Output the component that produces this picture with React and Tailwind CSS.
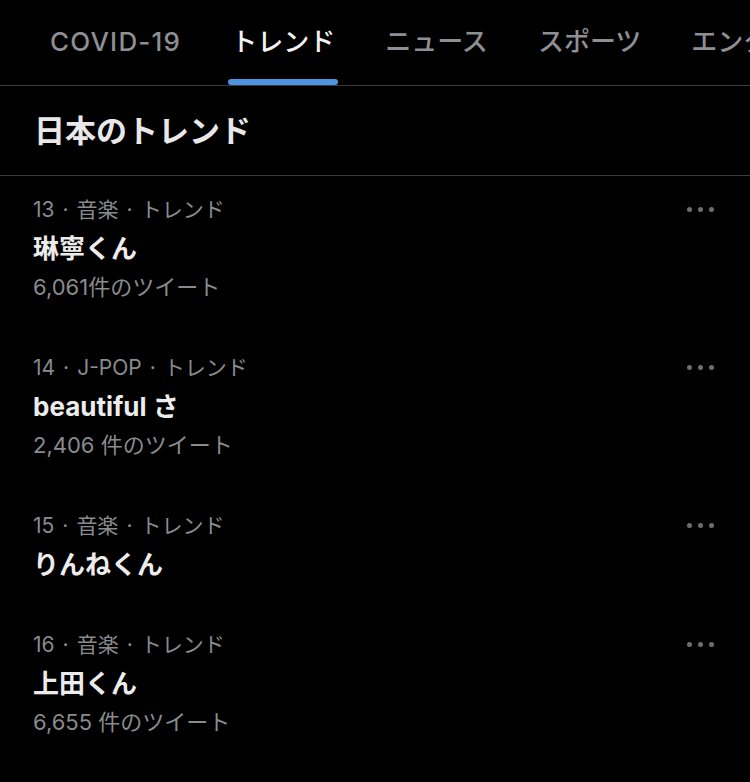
const tabs = ["COVID-19", "トレンド", "ニュース", "スポーツ", "エンタメ"]

const trends = [
  { rank: 13, category: "音楽", name: "琳寧くん", count: "6,061件のツイート" },
  { rank: 14, category: "J-POP", name: "beautiful さ", count: "2,406 件のツイート" },
  { rank: 15, category: "音楽", name: "りんねくん" },
  { rank: 16, category: "音楽", name: "上田くん", count: "6,655 件のツイート" },
]

const MoreDots = () => (
  <div className="flex h-[39px] items-center gap-[6px] self-start">
    <span className="block h-[5px] w-[5px] rounded-full bg-[#6e6e6e]" />
    <span className="block h-[5px] w-[5px] rounded-full bg-[#6e6e6e]" />
    <span className="block h-[5px] w-[5px] rounded-full bg-[#6e6e6e]" />
  </div>
)

const App = () => {
  return (
    <div
      className="h-[782px] w-[750px] overflow-hidden bg-black"
      style={{ fontFamily: 'Inter, "Noto Sans CJK JP", sans-serif' }}
    >
      <nav className="flex h-[85px] gap-[50px] overflow-hidden whitespace-nowrap pl-[50px]">
        {tabs.map((tab, i) => (
          <div key={tab} className="relative flex h-full shrink-0 flex-col items-center">
            <span
              className={`pt-[20px] text-[26px] font-medium leading-[44px] ${
                i === 1 ? "text-[#f2f2f2]" : "text-[#8e8f92]"
              } ${i === 0 ? "tracking-[1.2px]" : ""}`}
            >
              {tab}
            </span>
            {i === 1 && <div className="absolute bottom-0 left-[-3px] right-[-3px] h-[6px] rounded-full bg-[#4d94e0]" />}
          </div>
        ))}
      </nav>
      <div className="h-px bg-[#3c3c3e]" />

      <h2 className="px-[34px] py-[23px] text-[31px] font-bold leading-[43px] text-[#e8e8e8]">日本のトレンド</h2>
      <div className="h-px bg-[#3c3c3e]" />

      <ul>
        {trends.map((t) => (
          <li key={t.rank} className="flex justify-between pl-[33px] pr-[36px] pt-[14px] pb-[27px]">
            <div className="flex flex-col">
              <span className="text-[21px] leading-[39px] text-[#8a8b8f]">
                {t.rank}
                <span className="px-[8px]">·</span>
                {t.category}
                <span className="px-[8px]">·</span>
                トレンド
              </span>
              <span className="text-[26px] font-bold leading-[39px] text-[#ececec]">{t.name}</span>
              {t.count && <span className="text-[22px] leading-[39px] text-[#8a8b8f]">{t.count}</span>}
            </div>
            <MoreDots />
          </li>
        ))}
      </ul>
    </div>
  )
}

export default App
